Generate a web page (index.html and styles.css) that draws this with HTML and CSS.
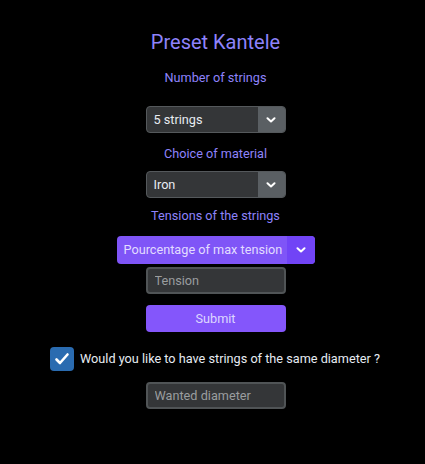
FILE: index.html
```html
<!DOCTYPE html>
<html>
<head>
<meta charset="utf-8">
<link rel="stylesheet" href="styles.css">
</head>
<body>
<main class="page">
  <h1 class="title">Preset Kantele</h1>
  <p class="label label-strings">Number of strings</p>
  <div class="select select-strings">
    <span class="select-value">5 strings</span>
    <span class="select-arrow"><svg width="10" height="6" viewBox="0 0 10 6"><path d="M1.5 1.2 L5 4.5 L8.5 1.2" fill="none" stroke="#ffffff" stroke-width="2" stroke-linecap="round" stroke-linejoin="round"/></svg></span>
  </div>
  <p class="label label-material">Choice of material</p>
  <div class="select select-material">
    <span class="select-value">Iron</span>
    <span class="select-arrow"><svg width="10" height="6" viewBox="0 0 10 6"><path d="M1.5 1.2 L5 4.5 L8.5 1.2" fill="none" stroke="#ffffff" stroke-width="2" stroke-linecap="round" stroke-linejoin="round"/></svg></span>
  </div>
  <p class="label label-tension">Tensions of the strings</p>
  <div class="select select-purple">
    <span class="select-value">Pourcentage of max tension</span>
    <span class="select-arrow"><svg width="10" height="6" viewBox="0 0 10 6"><path d="M1.5 1.2 L5 4.5 L8.5 1.2" fill="none" stroke="#ffffff" stroke-width="2" stroke-linecap="round" stroke-linejoin="round"/></svg></span>
  </div>
  <input class="field field-tension" type="text" placeholder="Tension">
  <button class="submit" type="button">Submit</button>
  <label class="check-row">
    <span class="checkbox"><svg width="16" height="14" viewBox="0 0 16 14"><path d="M2.5 7.5 L6 11 L13.5 2.5" fill="none" stroke="#ffffff" stroke-width="2.6" stroke-linecap="round" stroke-linejoin="round"/></svg></span>
    <span class="check-text">Would you like to have strings of the same diameter ?</span>
  </label>
  <input class="field field-diameter" type="text" placeholder="Wanted diameter">
</main>
</body>
</html>
```
FILE: styles.css
```css
html, body {
  margin: 0;
  padding: 0;
  background: #000000;
}
body {
  font-family: Roboto, "Liberation Sans", sans-serif;
  width: 425px;
  height: 464px;
  overflow: hidden;
}
.page {
  display: flex;
  flex-direction: column;
  align-items: center;
  padding-left: 6px;
}
.title {
  margin: 30px 0 0;
  font-size: 20px;
  line-height: 24px;
  font-weight: 400;
  color: #8e83fb;
}
.label {
  margin: 0;
  font-size: 12.7px;
  line-height: 16px;
  color: #8e83fb;
}
.label-strings { margin-top: 16px; }
.label-material { margin-top: 13px; }
.label-tension { margin-top: 10px; }
.select {
  display: flex;
  box-sizing: border-box;
  height: 27px;
  width: 140px;
  border: 1px solid #55595c;
  border-radius: 4px;
  overflow: hidden;
  background: #343638;
}
.select-strings { margin-top: 20px; }
.select-material { margin-top: 9px; }
.select-value {
  flex: 1;
  padding-left: 7px;
  font-size: 12.7px;
  line-height: 25px;
  color: #e8ecf2;
  white-space: nowrap;
}
.select-arrow {
  width: 27px;
  display: flex;
  align-items: center;
  justify-content: center;
  background: #5a5f63;
}
.select-purple {
  margin-top: 12px;
  width: 198px;
  height: 28px;
  border: none;
  background: #7f55f7;
}
.select-purple .select-value {
  line-height: 28px;
  color: #e2dcff;
}
.select-purple .select-arrow {
  width: 28px;
  background: #7144f6;
}
.field {
  box-sizing: border-box;
  width: 140px;
  height: 27px;
  margin: 3px 0 0;
  padding: 0 7px;
  border: 2px solid #505456;
  border-radius: 4px;
  background: #343638;
  color: #e8ecf2;
  font-family: Roboto, "Liberation Sans", sans-serif;
  font-size: 12.7px;
  outline: none;
}
.field::placeholder {
  color: #9a9d9f;
}
.submit {
  box-sizing: border-box;
  width: 140px;
  height: 27px;
  margin-top: 11px;
  border: none;
  border-radius: 4px;
  background: #8456fb;
  color: #ddd6ff;
  font-family: Roboto, "Liberation Sans", sans-serif;
  font-size: 12.7px;
  padding: 0;
}
.check-row {
  display: flex;
  align-items: center;
  gap: 6px;
  margin-top: 15px;
  align-self: flex-start;
  margin-left: 44px;
}
.checkbox {
  width: 24px;
  height: 24px;
  border-radius: 4px;
  background: #2a6bb0;
  display: flex;
  align-items: center;
  justify-content: center;
}
.check-text {
  font-size: 12.7px;
  line-height: 16px;
  color: #e6ebf2;
}
.field-diameter {
  margin-top: 11px;
}
```
